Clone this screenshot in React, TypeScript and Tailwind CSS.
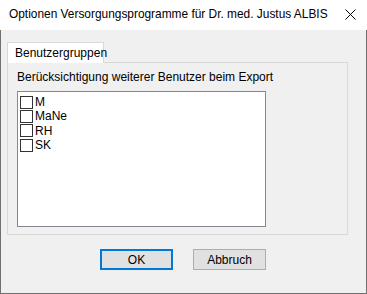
const USERS = ["M", "MaNe", "RH", "SK"];

const ui = { fontFamily: '"Liberation Sans", Arial, sans-serif' };

export default function App() {
  return (
    <div className="flex h-[294px] w-[367px] flex-col overflow-hidden bg-[#f0f0f0]" style={ui}>
      {/* title bar */}
      <div className="flex h-[30px] shrink-0 items-center justify-between bg-white pl-[9px] pr-[11px]">
        <span className="whitespace-nowrap text-[11.9px] text-black">
          Optionen Versorgungsprogramme für Dr. med. Justus ALBIS
        </span>
        <svg width="11" height="11" viewBox="0 0 11 11" className="mb-[1px]">
          <path d="M0.5 0.5 L10.5 10.5 M10.5 0.5 L0.5 10.5" stroke="#000" strokeWidth="1" />
        </svg>
      </div>

      {/* client area */}
      <div className="flex flex-1 flex-col border-x border-b border-[#707070] pl-[6px] pr-[18px] pt-[12px]">
        {/* tab strip */}
        <div className="flex">
          <div className="relative z-10 -mb-px flex h-[21px] w-[97px] items-center border border-b-0 border-[#d9d9d9] bg-white pl-[7px] text-[12px] text-black">
            Benutzergruppen
          </div>
        </div>

        {/* tab page */}
        <div className="flex h-[173px] flex-col border border-[#d9d9d9] pl-[9px] pt-[7px]">
          <span className="whitespace-nowrap text-[12px] leading-[14px] text-black">
            Berücksichtigung weiterer Benutzer beim Export
          </span>
          <div className="mt-[7px] flex h-[136px] w-[249px] flex-col border border-[#828790] bg-white pl-[2px] pt-[3px]">
            {USERS.map((u) => (
              <div key={u} className="flex h-[14.33px] items-center gap-[2px]">
                <span className="block h-[13px] w-[13px] shrink-0 border border-[#333] bg-white" />
                <span className="text-[12px] leading-[14px] text-black">{u}</span>
              </div>
            ))}
          </div>
        </div>

        {/* buttons */}
        <div className="mt-[14px] flex gap-[20px] pl-[93px]">
          <button className="flex h-[21px] w-[73px] items-center justify-center border-2 border-[#0078d7] bg-[#e1e1e1] text-[12px] text-black">
            OK
          </button>
          <button className="flex h-[21px] w-[73px] items-center justify-center border border-[#adadad] bg-[#e1e1e1] text-[12px] text-black">
            Abbruch
          </button>
        </div>
      </div>
    </div>
  );
}
